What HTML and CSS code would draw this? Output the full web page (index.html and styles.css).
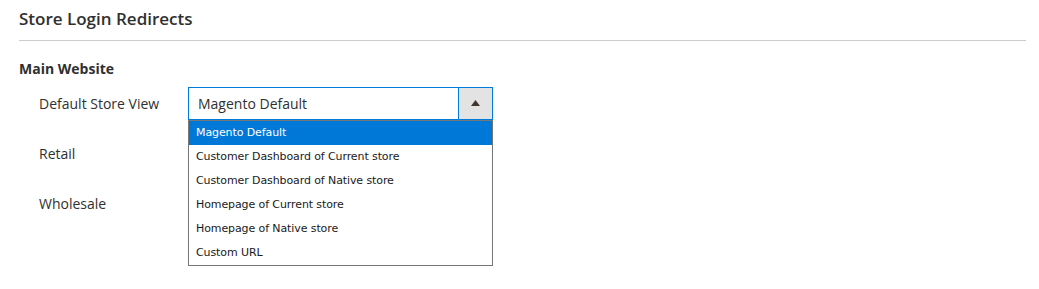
FILE: index.html
```html
<!DOCTYPE html>
<html>
<head>
<meta charset="utf-8">
<link rel="stylesheet" href="styles.css">
</head>
<body>
<div class="section">
  <div class="title">Store Login Redirects</div>
  <div class="group">
    <div class="group-title">Main Website</div>
    <div class="row">
      <div class="label">Default Store View</div>
      <div class="select-wrap">
        <div class="select open">
          <span class="value">Magento Default</span>
          <span class="btn"><svg width="9" height="6" viewBox="0 0 9 6"><path d="M0 6 L4.5 0 L9 6 Z" fill="#41362f"/></svg></span>
        </div>
        <ul class="dropdown">
          <li class="active">Magento Default</li>
          <li>Customer Dashboard of Current store</li>
          <li>Customer Dashboard of Native store</li>
          <li>Homepage of Current store</li>
          <li>Homepage of Native store</li>
          <li>Custom URL</li>
        </ul>
      </div>
    </div>
    <div class="row">
      <div class="label">Retail</div>
      <div class="select-wrap"><div class="select"></div></div>
    </div>
    <div class="row">
      <div class="label">Wholesale</div>
      <div class="select-wrap"><div class="select"></div></div>
    </div>
  </div>
</div>
</body>
</html>
```
FILE: styles.css
```css
html, body { margin: 0; padding: 0; background: #fff; }
body { font-family: "Open Sans", sans-serif; color: #303030; width: 1039px; height: 289px; overflow: hidden; }
.section { padding: 0 13px 0 19px; }
.title {
  font-size: 17px; font-weight: 600; color: #303030;
  height: 40px; line-height: 38px;
  border-bottom: 1px solid #cccccc;
}
.group { padding-top: 17px; }
.group-title { font-size: 14px; font-weight: 700; line-height: 22px; margin-bottom: 7px; }
.row { display: flex; align-items: center; height: 33px; margin-bottom: 17px; padding-left: 20px; }
.label { width: 149px; font-size: 14px; line-height: 20px; }
.select-wrap { position: relative; width: 305px; height: 33px; }
.select {
  box-sizing: border-box; height: 33px; width: 305px;
  border: 1px solid #adadad; display: flex; align-items: center;
  font-size: 14px; background: #fff;
}
.select .value { padding-left: 9px; flex: 1; }
.select.open { border-color: #007bdb; }
.btn {
  width: 33px; height: 31px; background: #e3e3e3; border-left: 1px solid #007bdb;
  display: flex; align-items: center; justify-content: center;
}
.btn svg { margin-top: -1px; }
.dropdown {
  position: absolute; left: 0; top: 33px; z-index: 5;
  box-sizing: border-box; width: 305px; margin: 0; padding: 0; list-style: none;
  background: #fff; border: 1px solid #767676;
  font-family: "DejaVu Sans", sans-serif; font-size: 11px; color: #1a1a1a;
  letter-spacing: -0.1px;
}
.dropdown li { height: 24px; line-height: 24px; padding-left: 7px; }
.dropdown li.active { background: #0078d7; color: #fff; }
```
